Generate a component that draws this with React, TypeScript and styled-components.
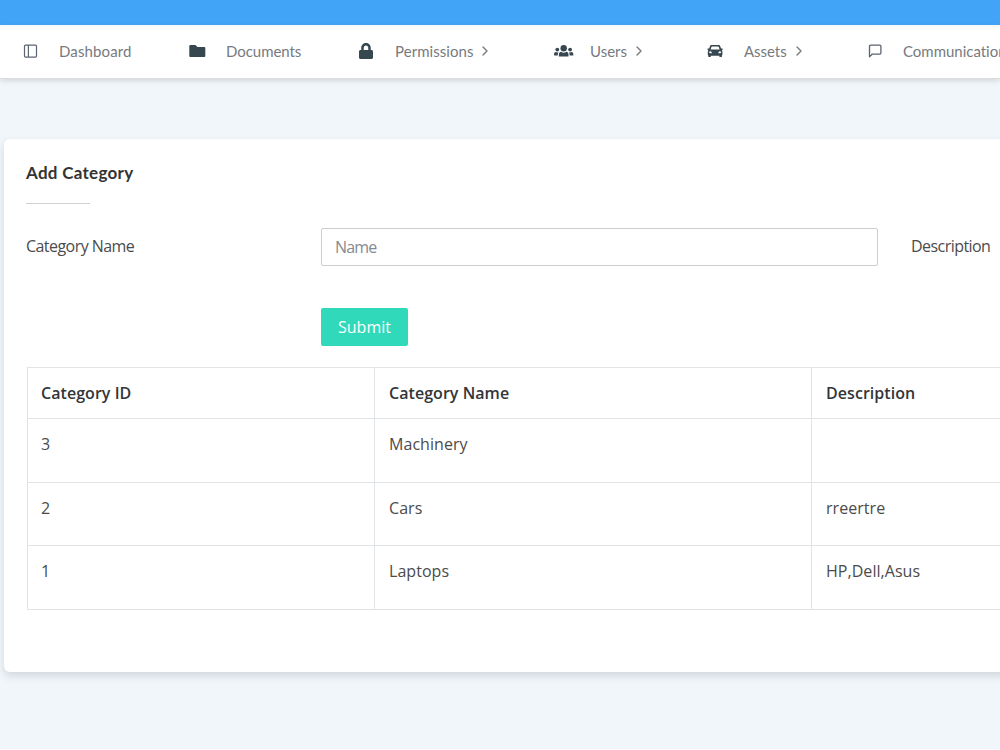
import React from "react";
import styled, { createGlobalStyle } from "styled-components";
import { FiChevronRight } from "react-icons/fi";
import { FaLock } from "react-icons/fa";

const GlobalStyle = createGlobalStyle`
  *, *::before, *::after { box-sizing: border-box; }
  body {
    margin: 0;
    background: #f1f6fa;
    color: #4b4b4b;
    font-family: "Open Sans", "Noto Sans", sans-serif;
    font-size: 16px;
    overflow: hidden;
  }
`;

const Page = styled.div`
  height: 750px;
  overflow: hidden;
  border-bottom: 1px solid #fafbfc;
`;

const TopBar = styled.div`
  height: 25px;
  background: #42a4f7;
`;

const Nav = styled.nav`
  display: flex;
  align-items: center;
  height: 54px;
  padding: 0 0 1px 23px;
  background: linear-gradient(#f8f8f8, #fff 6px);
  border-bottom: 1px solid #dadcde;
  box-shadow: 0 2px 5px rgba(0, 0, 0, 0.12);
`;

const NavItem = styled.a<{ $width: number }>`
  display: flex;
  align-items: center;
  flex: none;
  width: ${(p) => p.$width}px;
  color: #777a7e;
  white-space: nowrap;
`;

const IconSlot = styled.span<{ $width: number; $color: string }>`
  display: flex;
  flex: none;
  width: ${(p) => p.$width}px;
  color: ${(p) => p.$color};
`;

const NavLabel = styled.span<{ $spacing: number }>`
  font-family: Lato, sans-serif;
  font-size: 15px;
  line-height: 20px;
  letter-spacing: ${(p) => p.$spacing}px;
`;

const Chevron = styled(FiChevronRight)`
  margin-left: 4px;
  flex: none;
`;

const Card = styled.main`
  width: 1400px;
  height: 533px;
  margin: 60px 0 0 4px;
  padding: 22px 22px 0;
  background: #fff;
  border-radius: 6px;
  box-shadow: 0 4px 8px rgba(40, 60, 70, 0.16);
`;

const Title = styled.h1`
  margin: 0;
  font-family: Lato, sans-serif;
  font-size: 17px;
  font-weight: 700;
  line-height: 24px;
  letter-spacing: 0.28px;
  color: #333;
`;

const Rule = styled.div`
  width: 64px;
  height: 1px;
  margin-top: 18px;
  background: #cfd1d3;
`;

const FormRow = styled.div`
  display: grid;
  grid-template-columns: 295px 557px 1fr;
  margin-top: 24px;
`;

const Label = styled.label`
  padding-top: 7px;
  font-size: 16px;
  line-height: 22px;
  letter-spacing: -0.55px;
`;

const Input = styled.input`
  height: 38px;
  padding: 0 13px;
  border: 1px solid #cccecf;
  border-radius: 2px;
  background: #fff;
  font: 16px "Open Sans", sans-serif;
  letter-spacing: -0.8px;
  outline: none;
  &::placeholder { color: #848a92; opacity: 1; }
`;

const SideLabel = styled(Label)`
  padding-left: 33px;
`;

const Submit = styled.button`
  display: block;
  width: 87px;
  height: 38px;
  margin: 42px 0 0 295px;
  padding: 0;
  border: 0;
  border-radius: 2px;
  background: #2fd9b9;
  color: #fff;
  font: 500 16px "Open Sans", sans-serif;
`;

const Table = styled.table`
  width: 1340px;
  margin: 21px 0 0 1px;
  border-collapse: collapse;
  table-layout: fixed;
`;

const Row = styled.tr<{ $height: number }>`
  height: ${(p) => p.$height}px;
`;

const HeadCell = styled.th`
  padding: 13px 13px 0;
  border: 1px solid #e0e4e6;
  text-align: left;
  vertical-align: top;
  font-size: 16px;
  font-weight: 600;
  line-height: 24px;
  letter-spacing: 0.05px;
  color: #333539;
  & + & { padding-left: 14px; }
`;

const Cell = styled.td`
  padding: 13px 13px 0;
  border: 1px solid #e0e4e6;
  vertical-align: top;
  line-height: 24px;
  letter-spacing: 0.05px;
  & + & { padding-left: 14px; }
`;

const SidebarIcon = () => (
  <svg width="15" height="16" viewBox="0 0 15 16" fill="none" stroke="currentColor" strokeWidth="1.2">
    <rect x="1.500" y="2.1" width="12" height="12" rx="1" />
    <path d="M5.400 2v12" />
  </svg>
);

const FolderIcon = () => (
  <svg width="17" height="16" viewBox="0 0 17 16" fill="currentColor">
    <path d="M1.2 2h5.2l2 2h7a.9.9 0 0 1 .9.9v8.2a.9.9 0 0 1-.9.9H1.2a.9.9 0 0 1-.9-.9V2.9A.9.9 0 0 1 1.2 2z" />
  </svg>
);

const UsersIcon = () => (
  <svg width="20" height="16" viewBox="0 0 20 16" fill="currentColor">
    <circle cx="9.7" cy="5.3" r="3.2" />
    <circle cx="3.3" cy="6.6" r="1.9" />
    <circle cx="16.1" cy="6.6" r="1.9" />
    <path d="M4.9 13.6v-2.2c0-1.7 1-2.6 2.3-2.6.7.6 1.5.9 2.5.9s1.8-.3 2.5-.9c1.3 0 2.3.9 2.3 2.6v2.2z" />
    <path d="M.1 12.6v-1.5c0-1.3.7-2 1.7-2 .8.5 1.7.6 2.7.2-.5.7-.7 1.5-.7 2.4v.9zM19.3 12.6v-1.5c0-1.3-.7-2-1.7-2-.8.5-1.7.6-2.7.2.5.7.7 1.5.7 2.4v.9z" />
  </svg>
);

const CarIcon = () => (
  <svg width="16" height="16" viewBox="0 0 16 16" fill="currentColor" fillRule="evenodd">
    <path d="M4.8 2h6.6c1 0 1.6.5 1.9 1.4l.8 2.2h1.1c.5 0 .7.3.6.7l-.2.5-.9.3c.5.5.7 1 .7 1.7v2.7c0 .5-.2.8-.5 1v.9c0 .4-.3.6-.7.6h-1.1c-.4 0-.7-.2-.7-.6v-.7H3.8v.7c0 .4-.3.6-.7.6H2c-.4 0-.7-.2-.7-.6v-.9c-.3-.2-.5-.5-.5-1V8.8c0-.7.2-1.2.7-1.7l-.9-.3-.2-.5c-.1-.4.1-.7.6-.7h1.1l.8-2.2C3.2 2.5 3.8 2 4.8 2zm.3 1.6c-.4 0-.6.2-.7.5L3.6 6.4h9L11.8 4.1c-.1-.3-.3-.5-.7-.5zM3.3 8.3a1.2 1 0 1 0 0 2h1.3c.4 0 .4-.5.1-.9-.3-.6-.8-1.1-1.4-1.1zm9.6 0c-.6 0-1.1.5-1.4 1.1-.3.4-.3.9.1.9h1.3a1.2 1 0 1 0 0-2z" />
  </svg>
);

const MessageIcon = () => (
  <svg width="15" height="16" viewBox="0 0 15 16" fill="none" stroke="currentColor" strokeWidth="1.3" strokeLinejoin="round">
    <path d="M2.6 2.1h9.2a1.1 1.1 0 0 1 1.1 1.1v6.9a1.1 1.1 0 0 1-1.1 1.1H4.1L1.5 13.9V3.2a1.1 1.1 0 0 1 1.1-1.1z" />
  </svg>
);

const DARK = "#37474f";
const OUTLINE = "#5c6470";

const navItems = [
  { label: "Dashboard", icon: <SidebarIcon />, color: OUTLINE, width: 166, slot: 36, spacing: 0.13 },
  { label: "Documents", icon: <FolderIcon />, color: DARK, width: 169, slot: 37, spacing: -0.05 },
  { label: "Permissions", icon: <FaLock size={16} />, color: DARK, width: 196, slot: 37, spacing: 0.05, menu: true },
  { label: "Users", icon: <UsersIcon />, color: DARK, width: 153, slot: 36, spacing: 0, menu: true },
  { label: "Assets", icon: <CarIcon />, color: DARK, width: 161, slot: 37, spacing: -0.05, menu: true },
  { label: "Communications", icon: <MessageIcon />, color: OUTLINE, width: 180, slot: 35, spacing: -0.02, menu: true },
];

const categories = [
  { id: 3, name: "Machinery", description: "", height: 64 },
  { id: 2, name: "Cars", description: "rreertre", height: 63 },
  { id: 1, name: "Laptops", description: "HP,Dell,Asus", height: 64 },
];

export default function App() {
  return (
    <Page>
      <GlobalStyle />
      <TopBar />
      <Nav>
        {navItems.map((item) => (
          <NavItem key={item.label} $width={item.width}>
            <IconSlot $width={item.slot} $color={item.color}>{item.icon}</IconSlot>
            <NavLabel $spacing={item.spacing}>{item.label}</NavLabel>
            {item.menu && <Chevron size={16} />}
          </NavItem>
        ))}
      </Nav>
      <Card>
        <Title>Add Category</Title>
        <Rule />
        <FormRow>
          <Label htmlFor="name">Category Name</Label>
          <Input id="name" placeholder="Name" />
          <SideLabel>Description</SideLabel>
        </FormRow>
        <Submit type="button">Submit</Submit>
        <Table>
          <colgroup>
            <col style={{ width: 347 }} />
            <col style={{ width: 437 }} />
            <col />
          </colgroup>
          <thead>
            <Row $height={51}>
              <HeadCell>Category ID</HeadCell>
              <HeadCell>Category Name</HeadCell>
              <HeadCell>Description</HeadCell>
            </Row>
          </thead>
          <tbody>
            {categories.map((c) => (
              <Row key={c.id} $height={c.height}>
                <Cell>{c.id}</Cell>
                <Cell>{c.name}</Cell>
                <Cell>{c.description}</Cell>
              </Row>
            ))}
          </tbody>
        </Table>
      </Card>
    </Page>
  );
}
